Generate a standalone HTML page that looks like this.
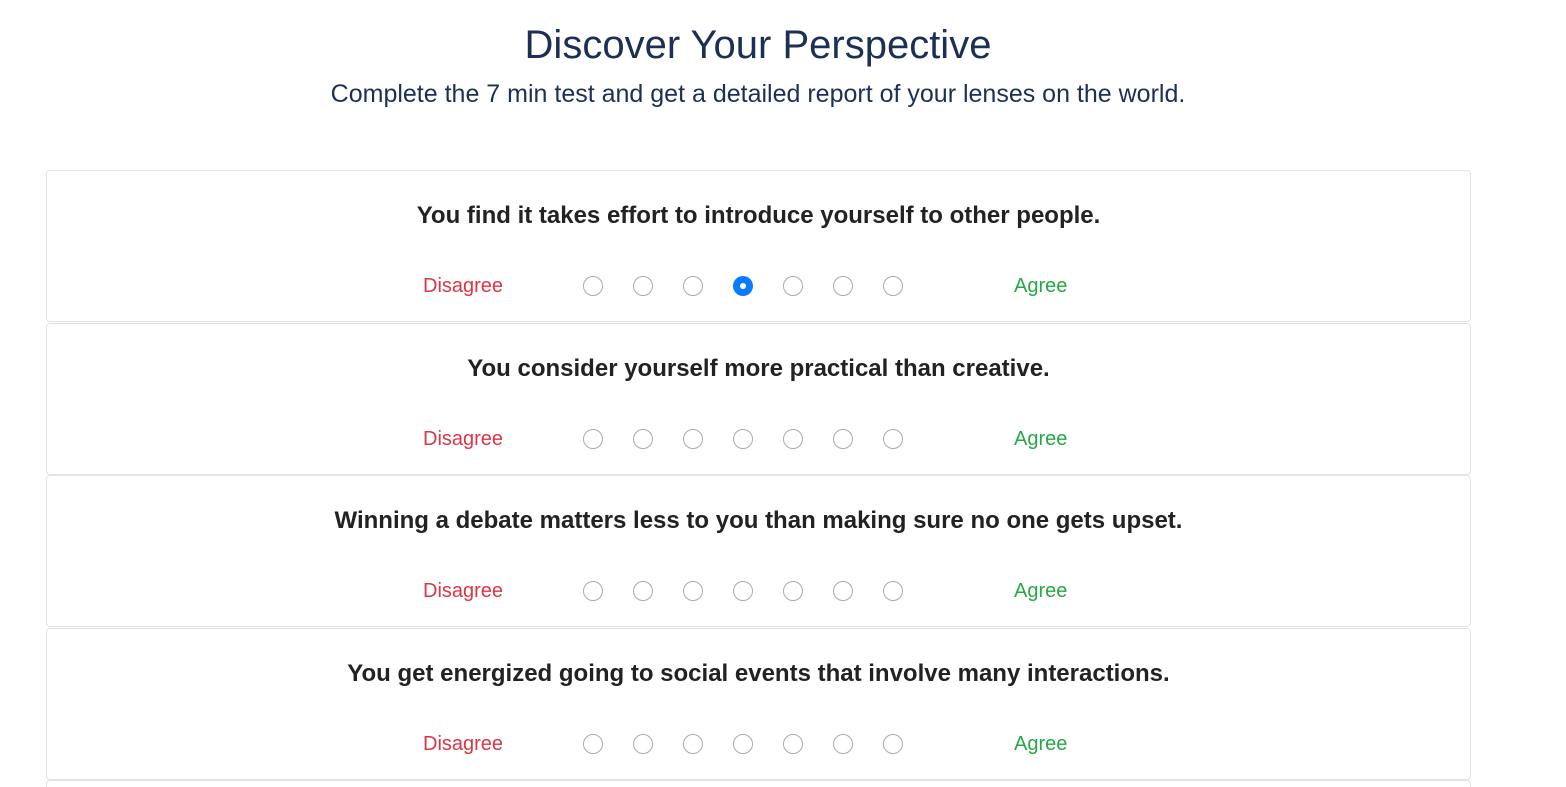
<!DOCTYPE html>
<html style="overflow:hidden;height:787px"><head><style>
body{margin:0;background:#fff;font-family:"Liberation Sans",sans-serif;width:1566px;height:787px;overflow:hidden;position:relative}
h1{position:absolute;top:20px;left:0;width:1516px;text-align:center;margin:0;font-weight:400;font-size:40px;color:#1c2f55;line-height:50px}
.sub{position:absolute;top:79px;left:0;width:1516px;text-align:center;font-size:25px;color:#1c2f55;line-height:30px}
.card{position:absolute;left:46px;width:1423px;height:150px;border:1px solid #e3e3e3;border-radius:4px;box-sizing:content-box}
.q{position:absolute;top:30px;left:0;width:100%;text-align:center;font-size:24px;font-weight:bold;color:#222;line-height:30px}
.dis{position:absolute;left:376px;top:103px;font-size:20px;color:#dc3545;line-height:24px}
.ag{position:absolute;left:967px;top:103px;font-size:20px;color:#28a745;line-height:24px}
.r{position:absolute;top:105px;width:18px;height:18px;border:1px solid #aaa;border-radius:50%;background:#fff}
.r.on{border:none;width:20px;height:20px;background:#0a7bff}
.r.on::after{content:"";position:absolute;left:7px;top:7px;width:6px;height:6px;border-radius:50%;background:#fff}
</style></head><body>
<h1>Discover Your Perspective</h1>
<div class="sub">Complete the 7 min test and get a detailed report of your lenses on the world.</div>

<div class="card" style="top:170px"><div class="q">You find it takes effort to introduce yourself to other people.</div><div class="dis">Disagree</div>
<div class="r" style="left:536px"></div><div class="r" style="left:586px"></div><div class="r" style="left:636px"></div><div class="r on" style="left:686px"></div><div class="r" style="left:736px"></div><div class="r" style="left:786px"></div><div class="r" style="left:836px"></div><div class="ag">Agree</div></div>

<div class="card" style="top:323px"><div class="q">You consider yourself more practical than creative.</div><div class="dis">Disagree</div>
<div class="r" style="left:536px"></div><div class="r" style="left:586px"></div><div class="r" style="left:636px"></div><div class="r" style="left:686px"></div><div class="r" style="left:736px"></div><div class="r" style="left:786px"></div><div class="r" style="left:836px"></div><div class="ag">Agree</div></div>

<div class="card" style="top:475px"><div class="q">Winning a debate matters less to you than making sure no one gets upset.</div><div class="dis">Disagree</div>
<div class="r" style="left:536px"></div><div class="r" style="left:586px"></div><div class="r" style="left:636px"></div><div class="r" style="left:686px"></div><div class="r" style="left:736px"></div><div class="r" style="left:786px"></div><div class="r" style="left:836px"></div><div class="ag">Agree</div></div>

<div class="card" style="top:628px"><div class="q">You get energized going to social events that involve many interactions.</div><div class="dis">Disagree</div>
<div class="r" style="left:536px"></div><div class="r" style="left:586px"></div><div class="r" style="left:636px"></div><div class="r" style="left:686px"></div><div class="r" style="left:736px"></div><div class="r" style="left:786px"></div><div class="r" style="left:836px"></div><div class="ag">Agree</div></div>

<div class="card" style="top:780px;height:20px"></div>
</body></html>
